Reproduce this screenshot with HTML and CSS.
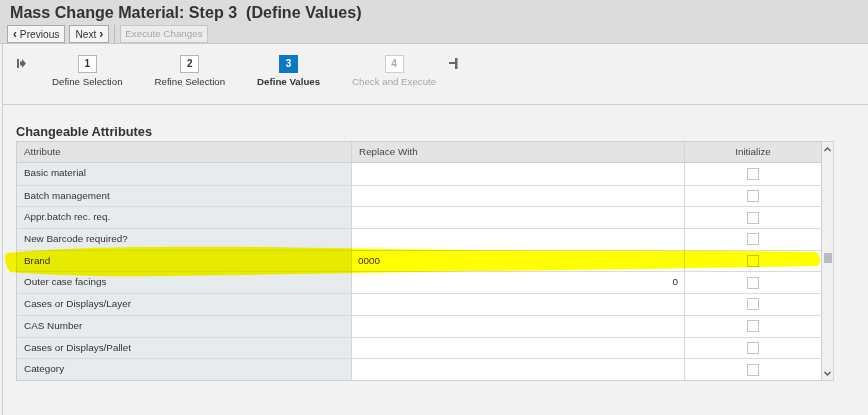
FILE: index.html
```html
<!DOCTYPE html>
<html>
<head>
<meta charset="utf-8">
<link rel="stylesheet" href="styles.css">
</head>
<body>
<div class="page">
  <header class="header">
    <h1 class="title">Mass Change Material: Step 3&nbsp; (Define Values)</h1>
    <div class="toolbar">
      <button class="btn"><span class="chev">&#8249;</span> Previous</button>
      <button class="btn">Next <span class="chev">&#8250;</span></button>
      <span class="sep"></span>
      <button class="btn disabled">Execute Changes</button>
    </div>
  </header>

  <nav class="roadmap">
    <svg class="rm-icon start" width="9" height="9" viewBox="0 0 9 9"><rect x="0" y="0" width="2" height="9" fill="#666"/><path d="M3 2.5h2V0l4 4.5L5 9V6.5H3z" fill="#666"/></svg>
    <div class="step"><span class="box">1</span><span class="label">Define Selection</span></div>
    <div class="step"><span class="box">2</span><span class="label">Refine Selection</span></div>
    <div class="step active"><span class="box">3</span><span class="label">Define Values</span></div>
    <div class="step disabled"><span class="box">4</span><span class="label">Check and Execute</span></div>
    <svg class="rm-icon end" width="9" height="11" viewBox="0 0 9 11"><rect x="6" y="0" width="2.5" height="11" fill="#666"/><rect x="0" y="4" width="6" height="2" fill="#666"/></svg>
  </nav>

  <section class="content">
    <h2 class="section-title">Changeable Attributes</h2>
    <div class="table-wrap">
      <div class="table">
        <div class="row head">
          <div class="cell c1">Attribute</div>
          <div class="cell c2">Replace With</div>
          <div class="cell c3 center">Initialize</div>
        </div>
        <div class="row"><div class="cell c1">Basic material</div><div class="cell c2"></div><div class="cell c3 center"><span class="cb"></span></div></div>
        <div class="row"><div class="cell c1">Batch management</div><div class="cell c2"></div><div class="cell c3 center"><span class="cb"></span></div></div>
        <div class="row"><div class="cell c1">Appr.batch rec. req.</div><div class="cell c2"></div><div class="cell c3 center"><span class="cb"></span></div></div>
        <div class="row"><div class="cell c1">New Barcode required?</div><div class="cell c2"></div><div class="cell c3 center"><span class="cb"></span></div></div>
        <div class="row"><div class="cell c1">Brand</div><div class="cell c2 val">0000</div><div class="cell c3 center"><span class="cb"></span></div></div>
        <div class="row"><div class="cell c1">Outer case facings</div><div class="cell c2 num">0</div><div class="cell c3 center"><span class="cb"></span></div></div>
        <div class="row"><div class="cell c1">Cases or Displays/Layer</div><div class="cell c2"></div><div class="cell c3 center"><span class="cb"></span></div></div>
        <div class="row"><div class="cell c1">CAS Number</div><div class="cell c2"></div><div class="cell c3 center"><span class="cb"></span></div></div>
        <div class="row"><div class="cell c1">Cases or Displays/Pallet</div><div class="cell c2"></div><div class="cell c3 center"><span class="cb"></span></div></div>
        <div class="row"><div class="cell c1">Category</div><div class="cell c2"></div><div class="cell c3 center"><span class="cb"></span></div></div>
      </div>
      <div class="scrollbar">
        <svg class="arrow" width="7" height="5" viewBox="0 0 7 5"><path d="M0.5 4L3.5 1L6.5 4" fill="none" stroke="#555" stroke-width="1.3"/></svg>
        <div class="track"><div class="thumb"></div></div>
        <svg class="arrow" width="7" height="5" viewBox="0 0 7 5"><path d="M0.5 1L3.5 4L6.5 1" fill="none" stroke="#555" stroke-width="1.3"/></svg>
      </div>
    </div>
  </section>

  <svg class="highlight" width="830" height="36" viewBox="0 0 830 36">
    <path d="M6 8 C 40 5, 90 2, 160 2 C 260 1, 360 4, 470 5 C 600 6, 720 5, 815 7 C 821 10, 822 17, 818 21 C 700 23, 600 25, 470 26 C 360 28, 250 30, 160 31 C 100 32, 50 30, 10 27 C 5 21, 4 12, 6 8 Z" fill="#ffff00"/>
  </svg>
</div>
</body>
</html>
```
FILE: styles.css
```css
* { box-sizing: border-box; }
html, body { margin: 0; padding: 0; }
body {
  background: #f2f2f2;
  font-family: "Liberation Sans", Arial, sans-serif;
  color: #333;
  width: 868px;
  height: 415px;
  overflow: hidden;
}
.page { position: relative; height: 415px; }

.header {
  background: #dcdcdc;
  height: 44px;
  border-bottom: 1px solid #c9c9c9;
}
.title {
  margin: 0;
  padding: 2px 0 0 10px;
  font-size: 16.1px;
  font-weight: bold;
  line-height: 20px;
  color: #333;
}
.toolbar {
  display: flex;
  align-items: center;
  gap: 4px;
  padding-left: 7px;
  margin-top: 3px;
}
.btn {
  height: 18px;
  padding: 0 5px;
  font-family: inherit;
  font-size: 10.2px;
  color: #333;
  background: #f5f5f5;
  border: 1px solid #a9a9a9;
  border-radius: 0;
  line-height: 16px;
}
.btn .chev { font-size: 12px; font-weight: bold; }
.btn.disabled { color: #a6a6a6; border-color: #c6c6c6; background: #ececec; padding: 0 4px; font-size: 9.8px; }
.sep {
  width: 1px;
  height: 18px;
  background: #bcbcbc;
  margin: 0 1px;
}

.roadmap {
  display: flex;
  align-items: flex-start;
  height: 61px;
  margin-left: 2px;
  border-left: 1px solid #cfcfcf;
  border-bottom: 1px solid #cfcfcf;
  padding-left: 14px;
}
.rm-icon { flex: none; margin-top: 15px; }
.rm-icon.start { margin-right: 18px; }
.rm-icon.end { margin-left: -3px; margin-top: 14px; }
.step {
  display: flex;
  flex-direction: column;
  align-items: center;
  padding: 0 16px;
  margin-top: 11px;
}
.step:first-of-type { padding-left: 8px; }
.box {
  width: 19px;
  height: 18px;
  border: 1px solid #b5b5b5;
  background: #fff;
  font-size: 10px;
  font-weight: bold;
  text-align: center;
  line-height: 15px;
  color: #333;
}
.label {
  font-size: 9.7px;
  margin-top: 3px;
  white-space: nowrap;
  color: #333;
}
.step.active .box { background: #0b7ac2; border-color: #0b7ac2; color: #fff; }
.step.active .label { font-weight: bold; }
.step.disabled .box { color: #aaa; border-color: #cfcfcf; }
.step.disabled .label { color: #a8a8a8; }

.content {
  margin-left: 2px;
  border-left: 1px solid #cfcfcf;
  height: 310px;
  padding-left: 13px;
}
.section-title {
  margin: 0;
  padding-top: 18px;
  font-size: 12.8px;
  font-weight: bold;
  line-height: 17px;
  color: #333;
}
.table-wrap {
  display: flex;
  margin-top: 1px;
  width: 818px;
}
.table {
  width: 805px;
  border: 1px solid #cfcfcf;
  border-right: none;
}
.row {
  display: flex;
  height: 21.7px;
  border-top: 1px solid #dadada;
}
.row:first-child { border-top: none; }
.row.head { height: 21px; background: #e4e4e4; border-bottom: 1px solid #cfcfcf; }
.row.head + .row { border-top: none; }
.cell {
  font-size: 9.9px;
  line-height: 20px;
  padding-left: 7px;
  white-space: nowrap;
  overflow: hidden;
}
.c1 { width: 335px; background: #e7ebee; border-right: 1px solid #d6d6d6; }
.c2 { width: 333px; background: #fff; border-right: 1px solid #d6d6d6; }
.c3 { flex: 1; background: #fff; }
.head .cell { background: #e4e4e4; color: #444; }
.center { display: flex; justify-content: center; align-items: center; padding-left: 0; }
.val { padding-left: 6px; }
.num { text-align: right; padding-right: 6px; }
.cb {
  display: block;
  width: 12px;
  height: 12px;
  border: 1px solid #c4c4c4;
  background: #fff;
}
.scrollbar {
  width: 13px;
  border: 1px solid #d4d4d4;
  border-left: 1px solid #cfcfcf;
  background: #f0f0f0;
  display: flex;
  flex-direction: column;
  align-items: center;
  padding: 5px 0 4px;
}
.track { flex: 1; width: 100%; position: relative; }
.thumb {
  position: absolute;
  left: 2px;
  top: 101px;
  width: 8px;
  height: 10px;
  background: #b9bcc2;
}

.highlight {
  position: absolute;
  left: 0;
  top: 245px;
  mix-blend-mode: multiply;
  pointer-events: none;
}
```
